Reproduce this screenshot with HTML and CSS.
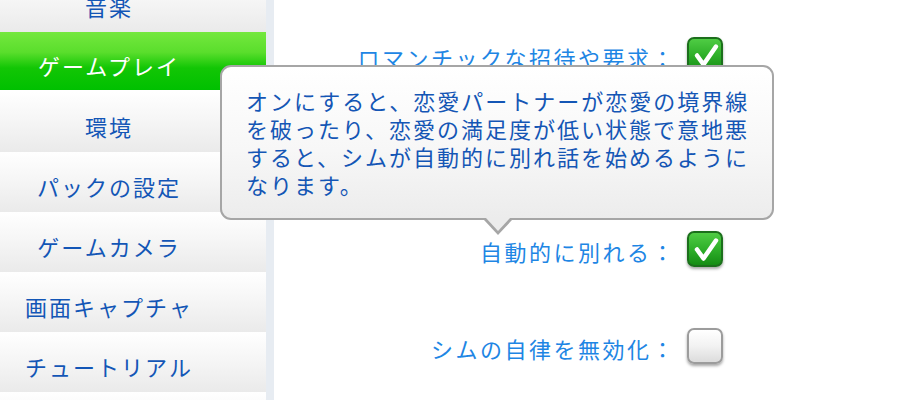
FILE: index.html
```html
<!DOCTYPE html>
<html lang="ja">
<head>
	<meta charset="UTF-8">
	<title>ゲームオプション</title>
	<link rel="stylesheet" href="styles.css">
</head>
<body>
	<div class="screen">
		<div class="sidebar">
			<div class="menu">
				<div class="menu-item">音楽</div>
				<div class="menu-item active">ゲームプレイ</div>
				<div class="menu-item">環境</div>
				<div class="menu-item">パックの設定</div>
				<div class="menu-item">ゲームカメラ</div>
				<div class="menu-item">画面キャプチャ</div>
				<div class="menu-item">チュートリアル</div>
				<div class="menu-item"></div>
			</div>
		</div>

		<div class="options">
			<div class="option-row">
				<span class="option-label">ロマンチックな招待や要求：</span>
				<span class="checkbox checked">
					<svg viewBox="0 0 34 34" width="34" height="34"><path d="M9 17.5 L15.5 26.5 L28 8.5"/></svg>
				</span>
			</div>
			<!-- row hidden behind the tooltip -->
			<div class="option-row"></div>
			<div class="option-row">
				<span class="option-label">自動的に別れる：</span>
				<span class="checkbox checked">
					<svg viewBox="0 0 34 34" width="34" height="34"><path d="M9 17.5 L15.5 26.5 L28 8.5"/></svg>
				</span>
			</div>
			<div class="option-row">
				<span class="option-label">シムの自律を無効化：</span>
				<span class="checkbox"></span>
			</div>
		</div>

		<div class="tooltip">
			オンにすると、恋愛パートナーが恋愛の境界線<br>
			を破ったり、恋愛の満足度が低い状態で意地悪<br>
			すると、シムが自動的に別れ話を始めるように<br>
			なります。
		</div>
	</div>
</body>
</html>
```

FILE: styles.css
```css
body {
	margin: 0;
	background: white;
	font-family: "Noto Sans CJK JP", "Noto Sans", sans-serif;
}

.screen {
	position: relative;
	width: 900px;
	height: 400px;
	overflow: hidden;
	display: flex;
}

.sidebar {
	width: 266px;
	border-right: 8px solid #e7ecf2;
	flex-shrink: 0;
}

.menu {
	margin-top: -28px;
}

.menu-item {
	height: 52px;
	line-height: 52px;
	padding-top: 8px;
	padding-right: 48px;
	text-align: center;
	font-size: 22px;
	letter-spacing: 2px;
	color: #1356b6;
	background: linear-gradient(#ffffff, #f6f6f6 45%, #eaeaea);
	white-space: nowrap;
}

.menu-item.active {
	height: 50px;
	line-height: 50px;
	margin-bottom: 2px;
	color: white;
	background: linear-gradient(#74e83e, #5ade2c 35%, #12c605 62%, #00c000);
}

.options {
	flex-grow: 1;
	padding-top: 6px;
	padding-right: 177px;
}

.option-row {
	height: 97px;
	display: flex;
	justify-content: flex-end;
	align-items: center;
	gap: 11px;
}

.option-label {
	margin-top: 4px;
	font-size: 22px;
	letter-spacing: 2.5px;
	color: #1e86e4;
	white-space: nowrap;
}

.checkbox {
	width: 32px;
	height: 32px;
	border-radius: 7px;
	border: 2px solid #9c9c9c;
	background: linear-gradient(#ffffff, #f2f2f2 50%, #dcdcdc);
	box-shadow: 0 2px 3px rgba(0, 0, 0, 0.35);
	display: flex;
	align-items: center;
	justify-content: center;
}

.checkbox.checked {
	border-color: #1c6f1c;
	background: linear-gradient(#4fcc44, #2fb02a 50%, #158c14);
}

.checkbox svg {
	display: block;
	margin: -1px;
}

.checkbox svg path {
	fill: none;
	stroke: white;
	stroke-width: 4.5;
	stroke-linecap: round;
	stroke-linejoin: round;
}

.tooltip {
	position: absolute;
	left: 220px;
	top: 65px;
	width: 502px;
	height: 112px;
	padding: 19px 24px 20px 24px;
	border: 2px solid #a6a6a6;
	border-radius: 11px;
	background: linear-gradient(#ffffff, #f7f7f7 55%, #ececec);
	font-size: 22px;
	line-height: 28px;
	letter-spacing: 2px;
	color: #1456b5;
	white-space: nowrap;
}

.tooltip::before,
.tooltip::after {
	content: "";
	position: absolute;
	left: 262px;
	width: 0;
	height: 0;
	border-style: solid;
}

.tooltip::before {
	bottom: -17px;
	border-width: 15px 14px 0 14px;
	border-color: #a6a6a6 transparent transparent transparent;
}

.tooltip::after {
	left: 264px;
	bottom: -13px;
	border-width: 13px 12px 0 12px;
	border-color: #ececec transparent transparent transparent;
}
```
